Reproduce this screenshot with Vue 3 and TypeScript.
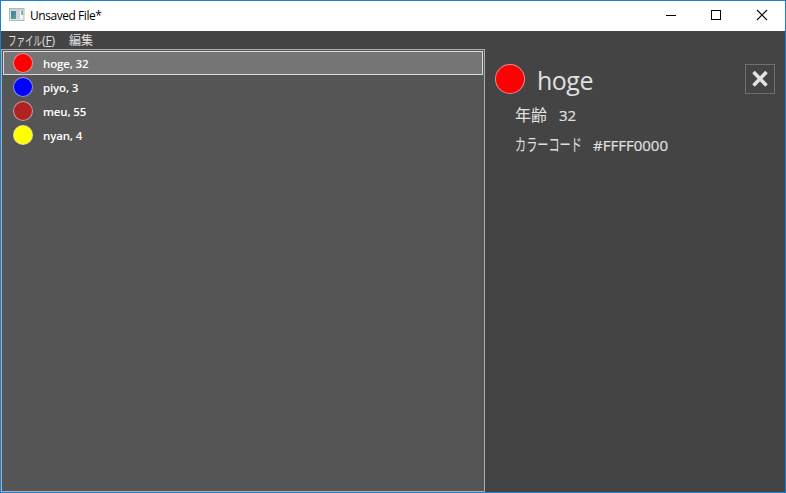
<script setup lang="ts">
import { computed, ref } from 'vue'

interface Person {
  name: string
  age: number
  color: string
}

const people: Person[] = [
  { name: 'hoge', age: 32, color: '#FFFF0000' },
  { name: 'piyo', age: 3, color: '#FF0000FF' },
  { name: 'meu', age: 55, color: '#FFB22222' },
  { name: 'nyan', age: 4, color: '#FFFFFF00' },
]

const selectedIndex = ref(0)
const selected = computed(() => people[selectedIndex.value])

// Colours are stored as #AARRGGBB
const toCss = (argb: string): string => '#' + argb.slice(3)
</script>

<template>
  <div class="window">
    <header class="titlebar">
      <svg class="app-icon" width="16" height="14" viewBox="0 0 16 14">
        <defs>
          <linearGradient id="pane" x1="0" y1="0" x2="1" y2="1">
            <stop offset="0" stop-color="#3c78b8" />
            <stop offset="1" stop-color="#58a878" />
          </linearGradient>
        </defs>
        <rect x="0.5" y="0.5" width="14.5" height="12" fill="#e4e6e8" stroke="#b4b8bc" />
        <rect x="1" y="1" width="13.5" height="1.5" fill="#c8ccd0" />
        <rect x="2" y="3" width="5" height="8" fill="url(#pane)" />
        <rect x="7" y="3" width="4" height="8" fill="#d2d4d6" />
        <rect x="11" y="3" width="3" height="8" fill="#f8f8f8" />
        <rect x="12" y="3" width="2" height="4" fill="#7fb3a4" />
      </svg>
      <span class="title">Unsaved File*</span>
      <div class="controls">
        <svg width="46" height="29" viewBox="0 0 46 29" shape-rendering="crispEdges">
          <rect x="18" y="14" width="10" height="1" fill="#000" />
        </svg>
        <svg width="46" height="29" viewBox="0 0 46 29" shape-rendering="crispEdges">
          <rect x="17.5" y="9.5" width="9" height="9" fill="none" stroke="#000" />
        </svg>
        <svg width="46" height="29" viewBox="0 0 46 29">
          <path d="M17 9L27 19M27 9L17 19" fill="none" stroke="#000" stroke-width="1.1" />
        </svg>
      </div>
    </header>

    <div class="body">
      <div class="left">
        <nav class="menu">
          <span class="menu-item file"><span class="kana">ファイル</span><span class="key">(<u>F</u>)</span></span>
          <span class="menu-item">編集</span>
        </nav>
        <ul class="list">
          <li
            v-for="(p, i) in people"
            :key="p.name"
            :class="['row', { active: i === selectedIndex }]"
            @click="selectedIndex = i"
          >
            <i class="dot" :style="{ background: toCss(p.color) }"></i>
            <span class="row-text">{{ p.name }}, {{ p.age }}</span>
          </li>
        </ul>
      </div>

      <section class="detail">
        <div class="head">
          <i class="dot big" :style="{ background: toCss(selected.color) }"></i>
          <span class="name">{{ selected.name }}</span>
          <button class="remove" aria-label="削除">
            <svg width="28" height="28" viewBox="0 0 28 28">
              <path d="M7.5 7L20.5 20.5M20.5 7L7.5 20.5" fill="none" stroke="#e2e2e2" stroke-width="3.6" />
            </svg>
          </button>
        </div>
        <div class="field"><span class="label age">年齢</span><span class="value">{{ selected.age }}</span></div>
        <div class="field"><span class="label code"><span>カラーコード</span></span><span class="value">{{ selected.color }}</span></div>
      </section>
    </div>
  </div>
</template>

<style>
body {
  margin: 0;
  overflow: hidden;
}
</style>

<style scoped>
.window {
  box-sizing: border-box;
  width: 786px;
  height: 493px;
  border: 1px solid #1a80d2;
  background: #444;
  color: #e0e0e0;
  font-family: "Open Sans", "Noto Sans CJK JP", sans-serif;
  font-size: 12px;
  display: flex;
  flex-direction: column;
}
.titlebar {
  height: 30px;
  flex: none;
  display: flex;
  background: #fff;
  color: #000;
}
.app-icon {
  margin: 7px 5px 0 8px;
}
.title {
  line-height: 30px;
  font-size: 12px;
  letter-spacing: -0.45px;
  white-space: nowrap;
}
.controls {
  margin-left: auto;
  margin-right: -1px;
  display: flex;
}
.body {
  flex: 1;
  min-height: 0;
  display: flex;
}
.left {
  width: 484px;
  display: flex;
  flex-direction: column;
}
.menu {
  height: 18px;
  flex: none;
  display: flex;
  padding-left: 7px;
  line-height: 19px;
  white-space: nowrap;
}
.menu-item {
  display: flex;
}
.file {
  width: 61px;
}
.kana {
  width: 52px;
  flex: none;
  margin-right: -18px;
  font-size: 13px;
  transform: scaleX(0.65);
  transform-origin: 0 50%;
}
.key {
  letter-spacing: -0.1px;
}
.list {
  flex: 1;
  margin: 0;
  padding: 1px;
  list-style: none;
  border: 1px solid #abadb3;
  background: #555;
}
.row {
  box-sizing: border-box;
  height: 24px;
  display: flex;
  align-items: center;
  padding: 0 9px;
  border: 1px solid transparent;
  color: #fff;
}
.active {
  border-color: #dadada;
  background: #757575;
}
.dot {
  box-sizing: border-box;
  width: 20px;
  height: 20px;
  flex: none;
  border-radius: 50%;
  border: 1px solid #d3d3d3aa;
}
.row-text {
  margin-left: 10px;
  padding-top: 2px;
  line-height: 20px;
  font-size: 11.5px;
  font-weight: 600;
  letter-spacing: -0.15px;
}
.detail {
  flex: 1;
  padding: 33px 10px 0;
}
.head {
  display: flex;
  height: 30px;
}
.big {
  width: 30px;
  height: 30px;
}
.name {
  margin-left: 12px;
  font-size: 25px;
  line-height: 32px;
  letter-spacing: -0.5px;
}
.remove {
  box-sizing: border-box;
  width: 30px;
  height: 30px;
  margin-left: auto;
  padding: 0;
  border: 1px solid #707070;
  background: transparent;
}
.remove svg {
  display: block;
}
.field {
  display: flex;
  height: 30px;
  padding-left: 20px;
  font-size: 16px;
  line-height: 42px;
  white-space: nowrap;
}
.label {
  flex: none;
}
.age {
  width: 44px;
}
.code {
  width: 78px;
}
.code span {
  display: inline-block;
  font-size: 17px;
  transform: scaleX(0.655);
  transform-origin: 0 50%;
}
.value {
  font-size: 15px;
  -webkit-text-stroke: 0.2px;
}
</style>
